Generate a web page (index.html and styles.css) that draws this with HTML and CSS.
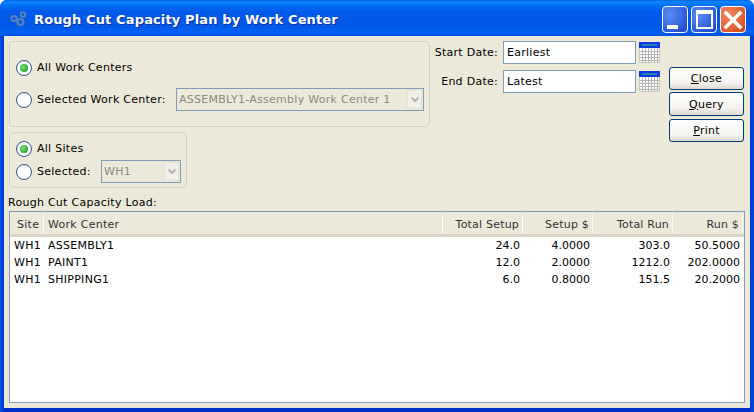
FILE: index.html
```html
<!DOCTYPE html>
<html lang="en">
<head>
<meta charset="utf-8">
<title>Rough Cut Capacity Plan by Work Center</title>
<link rel="stylesheet" href="styles.css">
</head>
<body>
<div class="window">
  <header class="titlebar">
    <svg class="app-icon" width="20" height="20" viewBox="0 0 20 20">
      <g fill="none" stroke="#5c83b8" stroke-width="2">
        <circle cx="5" cy="8.5" r="2.6"/>
        <circle cx="11.5" cy="12" r="3"/>
        <circle cx="14" cy="4.5" r="2.2"/>
      </g>
    </svg>
    <h1 class="title">Rough Cut Capacity Plan by Work Center</h1>
    <div class="win-buttons">
      <div class="win-btn"><span class="glyph-min"></span></div>
      <div class="win-btn"><span class="glyph-max"></span></div>
      <div class="win-btn win-close">
        <svg width="20" height="20" viewBox="0 0 20 20"><path d="M3 3L17 17M17 3L3 17" stroke="#fff" stroke-width="3.6" stroke-linecap="square" fill="none"/></svg>
      </div>
    </div>
  </header>
  <main class="content">
    <div class="top">
      <div class="left">
        <section class="group group-wc">
          <div class="row"><span class="radio on"></span><span class="label">All Work Centers</span></div>
          <div class="row">
            <span class="radio"></span><span class="label">Selected Work Center:</span>
            <div class="combo combo-wc"><span>ASSEMBLY1-Assembly Work Center 1</span><i class="arrow"><svg width="10" height="7" viewBox="0 0 10 7"><path d="M1.5 1.5L5 5L8.5 1.5" fill="none" stroke="#b5b5a8" stroke-width="2"/></svg></i></div>
          </div>
        </section>
        <section class="group group-site">
          <div class="row"><span class="radio on"></span><span class="label">All Sites</span></div>
          <div class="row">
            <span class="radio"></span><span class="label">Selected:</span>
            <div class="combo combo-site"><span>WH1</span><i class="arrow"><svg width="10" height="7" viewBox="0 0 10 7"><path d="M1.5 1.5L5 5L8.5 1.5" fill="none" stroke="#b5b5a8" stroke-width="2"/></svg></i></div>
          </div>
        </section>
      </div>
      <div class="dates">
        <div class="date-row">
          <span class="date-label">Start Date:</span>
          <div class="input">Earliest</div>
          <svg class="cal" width="21" height="21" viewBox="0 0 21 21"><use href="#cal"/></svg>
        </div>
        <div class="date-row">
          <span class="date-label">End Date:</span>
          <div class="input">Latest</div>
          <svg class="cal" width="21" height="21" viewBox="0 0 21 21"><use href="#cal"/></svg>
        </div>
      </div>
      <div class="actions">
        <button class="btn"><u>C</u>lose</button>
        <button class="btn btn-mid"><u>Q</u>uery</button>
        <button class="btn"><u>P</u>rint</button>
      </div>
    </div>
    <div class="list-label">Rough Cut Capacity Load:</div>
    <div class="table">
      <div class="thead">
        <div class="c site th">Site</div>
        <div class="c wc th">Work Center</div>
        <div class="c n1 num th">Total Setup</div>
        <div class="c n2 num th">Setup $</div>
        <div class="c n3 num th">Total Run</div>
        <div class="c n4 num th">Run $</div>
      </div>
      <div class="tbody">
        <div class="tr"><div class="c site">WH1</div><div class="c wc">ASSEMBLY1</div><div class="c n1 num">24.0</div><div class="c n2 num">4.0000</div><div class="c n3 num">303.0</div><div class="c n4 num">50.5000</div></div>
        <div class="tr"><div class="c site">WH1</div><div class="c wc">PAINT1</div><div class="c n1 num">12.0</div><div class="c n2 num">2.0000</div><div class="c n3 num">1212.0</div><div class="c n4 num">202.0000</div></div>
        <div class="tr"><div class="c site">WH1</div><div class="c wc">SHIPPING1</div><div class="c n1 num">6.0</div><div class="c n2 num">0.8000</div><div class="c n3 num">151.5</div><div class="c n4 num">20.2000</div></div>
      </div>
    </div>
  </main>
</div>
<svg width="0" height="0" class="defs">
  <defs>
    <g id="cal">
      <rect x="0" y="0" width="21" height="21" fill="#fff"/>
      <rect x="0" y="0" width="21" height="6" fill="#1438e0"/>
      <rect x="3" y="2" width="15" height="2" fill="#1f86b0"/>
      <path d="M0 9.5H21M0 12.5H21M0 15.5H21M0 18.5H21M3.5 6V21M6.5 6V21M9.5 6V21M12.5 6V21M15.5 6V21M18.5 6V21" stroke="#b4b4b0" stroke-width="1" fill="none"/>
      <path d="M0.5 6V20.5H20.5V6" stroke="#c8c8c0" stroke-width="1" fill="none"/>
    </g>
  </defs>
</svg>
</body>
</html>
```
FILE: styles.css
```css
* { box-sizing: border-box; }
html, body { margin: 0; padding: 0; }
body {
  width: 754px;
  height: 412px;
  overflow: hidden;
  font: 11px "DejaVu Sans", sans-serif;
  letter-spacing: 0.27px;
  color: #000;
}
.defs { position: absolute; }
.window {
  width: 754px;
  height: 412px;
  display: flex;
  flex-direction: column;
  background: linear-gradient(90deg, #0a4fe0 0, #0048e4 2px, #0030c8 4px, #0030c8 750px, #0048e4 752px, #0038c0 754px);
  border-radius: 7px 7px 0 0;
  overflow: hidden;
}
.titlebar {
  height: 36px;
  flex: none;
  display: flex;
  align-items: flex-start;
  padding: 0 8px 0 9px;
  background: linear-gradient(#0a5fe8 0, #0a8aff 2px, #0070f8 5px, #0058e8 12px, #0058e8 26px, #0062f5 32px, #0050dc 36px);
}
.app-icon { flex: none; margin: 10px 5px 0 0; }
.title {
  margin: 12px 0 0 0;
  flex: 1;
  font: bold 13px/16px "DejaVu Sans", sans-serif;
  color: #fff;
  letter-spacing: 0.13px;
  text-shadow: 1px 1px 0 #0f2f9a;
}
.win-buttons { display: flex; gap: 3px; margin-top: 6px; }
.win-btn {
  width: 26px;
  height: 27px;
  border: 1px solid #fff;
  border-radius: 4px;
  background: radial-gradient(circle at 30% 30%, #5a8ff5, #2a55d8 75%, #1c3fb8);
  position: relative;
  display: flex;
  align-items: center;
  justify-content: center;
}
.glyph-min { position: absolute; left: 4px; bottom: 3px; width: 11px; height: 4px; background: #fff; }
.glyph-max { width: 17px; height: 19px; border: 2px solid #fff; border-top-width: 4px; }
.win-close { background: radial-gradient(circle at 30% 30%, #f08a60, #e05a28 70%, #c84010); }
.content {
  flex: 1;
  margin: 0 4px 4px 4px;
  background: #ece9d8;
  padding: 5px 5px 5px 5px;
  display: flex;
  flex-direction: column;
  min-height: 0;
}
.top { display: flex; height: 147px; flex: none; }
.left { width: 421px; flex: none; display: flex; flex-direction: column; gap: 5px; }
.group {
  border: 1px solid #d0d0bf;
  border-radius: 5px;
}
.group-wc { height: 86px; padding: 14px 5px 0 6px; display: flex; flex-direction: column; gap: 9px; }
.group-site { width: 178px; height: 56px; padding: 4px 5px 0 6px; display: flex; flex-direction: column; gap: 0; }
.row { display: flex; align-items: center; height: 23px; }
.radio {
  flex: none;
  width: 16px;
  height: 16px;
  border-radius: 50%;
  border: 1px solid #2f5a8c;
  background: radial-gradient(circle at 60% 60%, #fff 50%, #e0e0d8);
  margin-right: 5px;
  display: flex;
  align-items: center;
  justify-content: center;
}
.radio.on::after {
  content: "";
  width: 8px;
  height: 8px;
  border-radius: 50%;
  background: radial-gradient(circle at 40% 40%, #7fe07f, #22aa22 70%);
}
.label { white-space: nowrap; }
.combo {
  margin-left: auto;
  height: 23px;
  border: 1px solid #7f9db9;
  color: #8a8a80;
  display: flex;
  align-items: center;
  justify-content: space-between;
  padding: 0 1px 0 2px;
  white-space: nowrap;
}
.combo-wc { width: 248px; }
.combo-site { width: 80px; }
.arrow {
  width: 15px;
  height: 19px;
  flex: none;
  background: #f0efe8;
  border: 1px solid #e4e3d8;
  display: flex;
  align-items: center;
  justify-content: center;
}
.dates { width: 230px; flex: none; display: flex; flex-direction: column; gap: 6px; }
.date-row { display: flex; align-items: center; height: 23px; }
.date-label { width: 68px; text-align: right; flex: none; }
.input {
  margin-left: 5px;
  width: 133px;
  height: 23px;
  border: 1px solid #7f9db9;
  background: #fff;
  padding: 0 3px;
  line-height: 21px;
}
.cal { margin-left: 3px; flex: none; }
.actions {
  width: 75px;
  margin-left: 9px;
  padding-top: 26px;
  display: flex;
  flex-direction: column;
  gap: 2px;
}
.btn {
  height: 23px;
  padding: 0;
  font: 11px "DejaVu Sans", sans-serif;
  letter-spacing: 0.27px;
  color: #000;
  border: 1px solid #003c74;
  border-radius: 3px;
  background: linear-gradient(#fff, #f4f3ee 70%, #dcd8ce);
}
.btn-mid { height: 24px; margin-bottom: 1px; }
.list-label { height: 23px; flex: none; padding: 8px 0 0 0; line-height: 14px; margin-left: -1px; }
.table {
  flex: 1;
  border: 1px solid #7f9db9;
  background: #fff;
  min-height: 0;
}
.thead {
  height: 25px;
  display: flex;
  background: #ece9d8;
  border-bottom: 3px solid #d8d5c5;
  padding-top: 2px;
  align-items: flex-start;
}
.tbody { padding-top: 0; }
.tr { display: flex; height: 17px; align-items: center; }
.c { white-space: nowrap; padding: 0 3px 0 4px; }
.th { color: #333; height: 19px; line-height: 21px; border-right: 1px solid #fdfdf8; padding-right: 3px; padding-left: 7px; }
.site { width: 34px; flex: none; }
.wc { width: 399px; flex: none; }
.n1 { width: 80px; flex: none; }
.n2 { width: 70px; flex: none; }
.n3 { width: 80px; flex: none; }
.n4 { width: 70px; flex: none; }
.num { text-align: right; letter-spacing: 0; }
.th.num { letter-spacing: 0.2px; }
.th.wc { padding-left: 4px; }
```
